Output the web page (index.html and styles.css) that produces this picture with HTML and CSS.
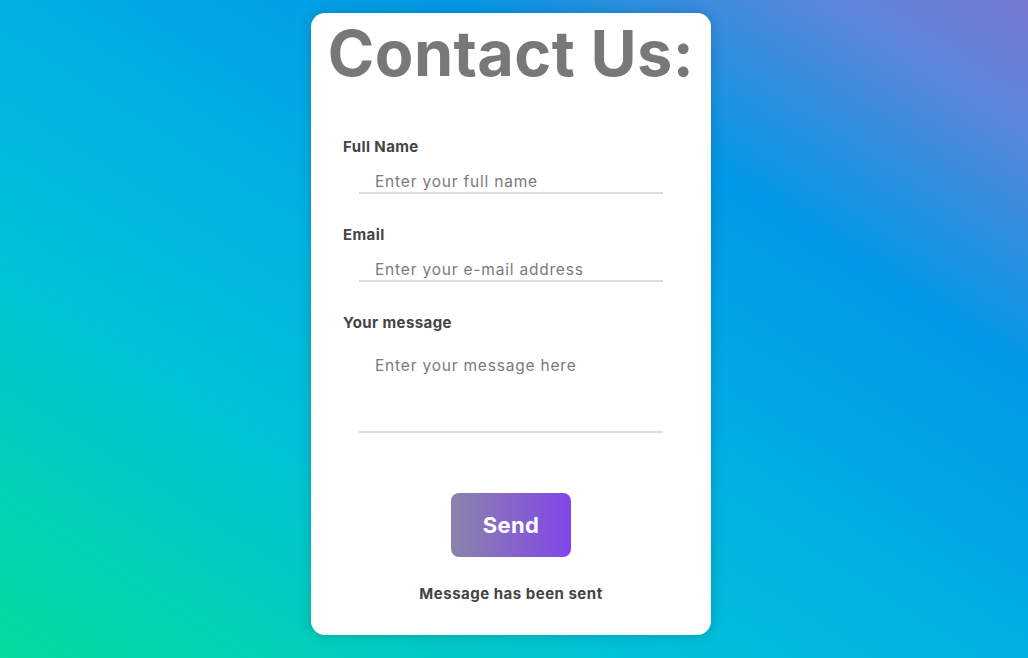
FILE: index.html
```html
<!DOCTYPE html>
<html lang="en">
<head>
<meta charset="utf-8">
<title>Contact Us</title>
<link rel="stylesheet" href="styles.css">
</head>
<body>
  <main class="card">
    <h1 class="title">Contact Us:</h1>
    <form class="form">
      <div class="field">
        <label class="label" for="name">Full Name</label>
        <input class="input" id="name" type="text" placeholder="Enter your full name">
      </div>
      <div class="field">
        <label class="label" for="email">Email</label>
        <input class="input" id="email" type="email" placeholder="Enter your e-mail address">
      </div>
      <div class="field">
        <label class="label" for="msg">Your message</label>
        <textarea class="input textarea" id="msg" placeholder="Enter your message here"></textarea>
      </div>
      <div class="actions">
        <button class="send" type="button">Send</button>
        <p class="status">Message has been sent</p>
      </div>
    </form>
  </main>
</body>
</html>
```

FILE: styles.css
```css
html, body {
  margin: 0;
  height: 100%;
}
body {
  font-family: "Inter", "Open Sans", sans-serif;
  background: linear-gradient(to top right, #02dc9c 0%, #00c2d6 30%, #00b0e4 50%, #0299e6 72%, #5a86da 90%, #7677d0 100%);
  display: flex;
  justify-content: center;
  align-items: flex-start;
  padding: 13px 6px 0 0;
  box-sizing: border-box;
}
.card {
  width: 400px;
  height: 622px;
  box-sizing: border-box;
  background: #fff;
  border-radius: 14px;
  box-shadow: 0 0 14px rgba(0, 0, 0, 0.18);
  padding: 0 32px;
}
.title {
  margin: 2px -32px 0;
  text-align: center;
  font-size: 63px;
  line-height: 76px;
  font-weight: 700;
  color: #7a7777;
  letter-spacing: 0.4px;
  white-space: nowrap;
}
.form {
  display: flex;
  flex-direction: column;
  margin-top: 46px;
}
.field {
  display: flex;
  flex-direction: column;
  margin-bottom: 31px;
}
.label {
  font-size: 15px;
  line-height: 20px;
  font-weight: 700;
  color: #444;
  letter-spacing: 0.4px;
}
.input {
  margin: 11px 16px 0;
  border: none;
  border-bottom: 2px solid #dcdcdc;
  outline: none;
  font-family: inherit;
  font-size: 15.5px;
  font-weight: 400;
  letter-spacing: 0.8px;
  color: #555;
  padding: 2px 16px 0;
  height: 26px;
  box-sizing: border-box;
  background: transparent;
}
.input::placeholder {
  color: #7a7a7a;
}
.textarea {
  height: 85px;
  padding-top: 8px;
  resize: none;
  margin-top: 15px;
}
.actions {
  display: flex;
  flex-direction: column;
  align-items: center;
  margin-top: 29px;
}
.send {
  width: 120px;
  height: 64px;
  border: none;
  border-radius: 8px;
  background: linear-gradient(to right, #8b84a9, #8146ea);
  color: #fff;
  font-family: inherit;
  font-size: 22px;
  font-weight: 700;
  letter-spacing: 0.3px;
}
.status {
  margin: 27px 0 0;
  font-size: 15px;
  line-height: 20px;
  font-weight: 700;
  color: #444;
  letter-spacing: 0.5px;
}
```
